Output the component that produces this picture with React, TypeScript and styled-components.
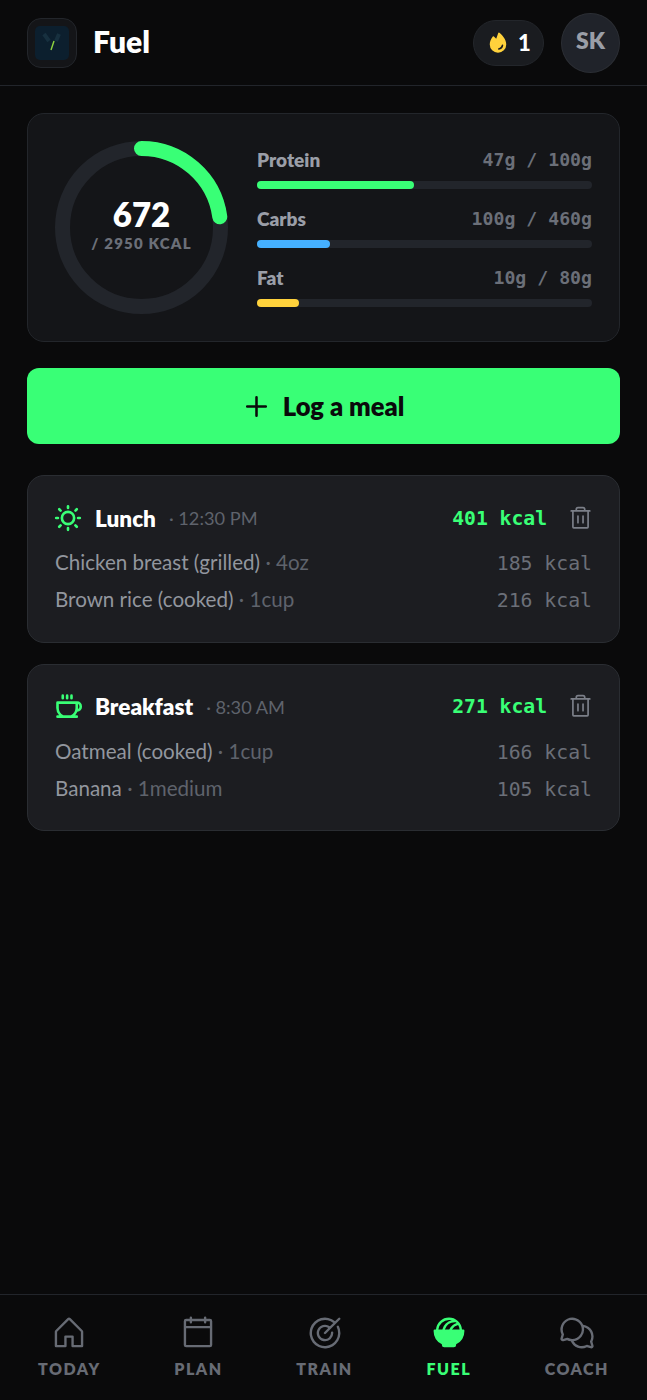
import { FC, ReactNode } from 'react';
import styled, { createGlobalStyle } from 'styled-components';
import {
  PiBowlFoodFill,
  PiCalendarBlank,
  PiChatsCircle,
  PiCoffeeBold,
  PiFireFill,
  PiHouse,
  PiPlusBold,
  PiSunBold,
  PiTarget,
  PiTrash,
} from 'react-icons/pi';

const GREEN = '#39ff76';
const SANS = '"Lato", "Noto Sans", sans-serif';
const MONO = '"DejaVu Sans Mono", "Liberation Mono", monospace';

const GlobalStyle = createGlobalStyle`
  html, body {
    margin: 0;
    padding: 0;
    background: #0a0a0b;
  }
  * {
    box-sizing: border-box;
  }
`;

const Page = styled.div`
  width: 647px;
  height: 1400px;
  display: flex;
  flex-direction: column;
  background: #0a0a0b;
  font-family: ${SANS};
  color: #fff;
`;

const Header = styled.header`
  height: 86px;
  padding: 0 27px;
  display: flex;
  align-items: center;
  border-bottom: 1px solid #22252b;
`;

const LogoBox = styled.div`
  width: 50px;
  height: 50px;
  display: flex;
  align-items: center;
  justify-content: center;
  border: 1px solid #23262b;
  border-radius: 14px;
  background: #141518;
`;

const Title = styled.h1`
  margin: 0 0 4px 16px;
  flex: 1;
  font-size: 30px;
  font-weight: 800;
`;

const StreakPill = styled.div`
  width: 71px;
  height: 46px;
  display: flex;
  align-items: center;
  justify-content: center;
  gap: 8px;
  border: 1px solid #23262b;
  border-radius: 23px;
  background: #1a1c20;
  font-size: 22px;
  font-weight: 900;
  color: #ffd23c;

  span {
    color: #fff;
  }
`;

const Avatar = styled.div`
  width: 59px;
  height: 60px;
  margin-left: 17px;
  padding-bottom: 5px;
  display: flex;
  align-items: center;
  justify-content: center;
  border: 1px solid #2b2e34;
  border-radius: 50%;
  background: #20232a;
  font-size: 23px;
  font-weight: 800;
  color: #9a9ea7;
`;

const Main = styled.main`
  flex: 1;
  padding: 27px 27px 0;
  display: flex;
  flex-direction: column;
`;

const Summary = styled.section`
  height: 229px;
  padding: 0 27px;
  display: flex;
  align-items: center;
  gap: 29px;
  border: 1px solid #23262b;
  border-radius: 17px;
  background: #141518;
`;

const Ring = styled.div`
  position: relative;
  width: 173px;
  height: 173px;
  flex: none;
`;

const RingLabel = styled.div`
  position: absolute;
  inset: 0;
  padding-bottom: 7px;
  display: flex;
  flex-direction: column;
  align-items: center;
  justify-content: center;
`;

const RingValue = styled.div`
  font-size: 33px;
  line-height: 38px;
  font-weight: 800;
`;

const RingGoal = styled.div`
  font-size: 15px;
  line-height: 20px;
  font-weight: 800;
  letter-spacing: 1.2px;
  color: #6b6f78;
`;

const Macros = styled.div`
  flex: 1;
  display: flex;
  flex-direction: column;
  gap: 19px;
`;

const MacroTop = styled.div`
  height: 22px;
  display: flex;
  align-items: center;
  justify-content: space-between;
`;

const MacroName = styled.div`
  font-size: 19px;
  font-weight: 800;
  color: #9a9ea7;
`;

const MacroAmount = styled.div`
  font-family: ${MONO};
  font-size: 18.2px;
  font-weight: 700;
  color: #6b6f78;
`;

const Track = styled.div`
  height: 8px;
  margin-top: 10px;
  border-radius: 4px;
  background: #22252b;
`;

const Fill = styled.div<{ $color: string }>`
  height: 100%;
  border-radius: 4px;
  background: ${({ $color }) => $color};
`;

const LogButton = styled.button`
  height: 76px;
  margin: 26px 0 31px;
  display: flex;
  align-items: center;
  justify-content: center;
  gap: 13px;
  border: 0;
  border-radius: 12px;
  background: ${GREEN};
  font-family: ${SANS};
  font-size: 25.5px;
  font-weight: 800;
  color: #0a0a0b;
`;

const MealCard = styled.section`
  padding: 20px 27px 24px;
  margin-bottom: 21px;
  border: 1px solid #2a2d32;
  border-radius: 17px;
  background: #1c1d21;
`;

const MealHead = styled.div`
  height: 44px;
  display: flex;
  align-items: center;
  margin-bottom: 4px;
`;

const MealIcon = styled.div`
  width: 39px;
  display: flex;
  color: ${GREEN};
  font-size: 28px;
  margin-left: -1px;
  margin-right: 2px;
`;

const MealName = styled.div`
  font-size: 22.5px;
  font-weight: 800;
`;

const MealTime = styled.div`
  flex: 1;
  margin-left: 13px;
  font-size: 18.2px;
  color: #5f636c;
`;

const MealKcal = styled.div`
  font-family: ${MONO};
  font-size: 19.7px;
  font-weight: 700;
  color: ${GREEN};
`;

const DeleteButton = styled.div`
  margin: 0 -2px 0 20px;
  display: flex;
  font-size: 27px;
  color: #7b7f88;
`;

const FoodRow = styled.div`
  height: 36.8px;
  display: flex;
  align-items: center;
  justify-content: space-between;
  font-size: 20.6px;
  color: #92969e;

  small {
    font-size: inherit;
    color: #5f636c;
  }
`;

const FoodKcal = styled.div`
  padding-top: 3px;
  font-family: ${MONO};
  font-size: 19.8px;
  color: #6b6f78;
`;

const BottomNav = styled.nav`
  height: 106px;
  padding: 19px 38px 0;
  display: flex;
  justify-content: space-between;
  border-top: 1px solid #22252b;
`;

const NavItem = styled.div<{ $active?: boolean }>`
  display: flex;
  flex-direction: column;
  align-items: center;
  gap: 7px;
  font-size: 16px;
  font-weight: 800;
  letter-spacing: 1.5px;
  color: ${({ $active }) => ($active ? GREEN : '#676b74')};
`;

const macros = [
  { name: 'Protein', amount: '47g / 100g', pct: 47, color: GREEN },
  { name: 'Carbs', amount: '100g / 460g', pct: 21.8, color: '#45b0ff' },
  { name: 'Fat', amount: '10g / 80g', pct: 12.5, color: '#ffd23c' },
];

const meals = [
  {
    name: 'Lunch',
    time: '· 12:30 PM',
    kcal: '401 kcal',
    icon: <PiSunBold />,
    foods: [
      { name: 'Chicken breast (grilled)', qty: '4oz', kcal: '185 kcal' },
      { name: 'Brown rice (cooked)', qty: '1cup', kcal: '216 kcal' },
    ],
  },
  {
    name: 'Breakfast',
    time: '· 8:30 AM',
    kcal: '271 kcal',
    icon: <PiCoffeeBold />,
    foods: [
      { name: 'Oatmeal (cooked)', qty: '1cup', kcal: '166 kcal' },
      { name: 'Banana', qty: '1medium', kcal: '105 kcal' },
    ],
  },
];

const tabs: { label: string; icon: ReactNode; active?: boolean }[] = [
  { label: 'TODAY', icon: <PiHouse size={38} /> },
  { label: 'PLAN', icon: <PiCalendarBlank size={38} /> },
  { label: 'TRAIN', icon: <PiTarget size={38} /> },
  { label: 'FUEL', icon: <PiBowlFoodFill size={38} />, active: true },
  { label: 'COACH', icon: <PiChatsCircle size={38} /> },
];

const CalorieRing: FC<{ value: number; goal: number }> = ({ value, goal }) => {
  const r = 79;
  const circumference = 2 * Math.PI * r;
  return (
    <Ring>
      <svg width="173" height="173" viewBox="0 0 173 173">
        <circle cx="86.5" cy="86.5" r={r} fill="none" stroke="#22252b" strokeWidth="15" />
        <circle
          cx="86.5"
          cy="86.5"
          r={r}
          fill="none"
          stroke={GREEN}
          strokeWidth="15"
          strokeLinecap="round"
          strokeDasharray={`${(circumference * value) / goal} ${circumference}`}
          transform="rotate(-90 86.5 86.5)"
        />
      </svg>
      <RingLabel>
        <RingValue>{value}</RingValue>
        <RingGoal>/ {goal} KCAL</RingGoal>
      </RingLabel>
    </Ring>
  );
};

const App: FC = () => (
  <Page>
    <GlobalStyle />
    <Header>
      <LogoBox>
        <svg width="34" height="34" viewBox="0 0 34 34">
          <rect width="34" height="34" rx="5" fill="#0c1f2e" />
          <path d="M9 8l5 7M24 8l-3 7" stroke="#17303f" strokeWidth="4" fill="none" />
          <path d="M19 15l-3 9" stroke="#8fd43f" strokeWidth="1.4" fill="none" />
        </svg>
      </LogoBox>
      <Title>Fuel</Title>
      <StreakPill>
        <PiFireFill size={24} />
        <span>1</span>
      </StreakPill>
      <Avatar>SK</Avatar>
    </Header>
    <Main>
      <Summary>
        <CalorieRing value={672} goal={2950} />
        <Macros>
          {macros.map((m) => (
            <div key={m.name}>
              <MacroTop>
                <MacroName>{m.name}</MacroName>
                <MacroAmount>{m.amount}</MacroAmount>
              </MacroTop>
              <Track>
                <Fill $color={m.color} style={{ width: `${m.pct}%` }} />
              </Track>
            </div>
          ))}
        </Macros>
      </Summary>
      <LogButton>
        <PiPlusBold size={27} />
        Log a meal
      </LogButton>
      {meals.map((meal) => (
        <MealCard key={meal.name}>
          <MealHead>
            <MealIcon>{meal.icon}</MealIcon>
            <MealName>{meal.name}</MealName>
            <MealTime>{meal.time}</MealTime>
            <MealKcal>{meal.kcal}</MealKcal>
            <DeleteButton>
              <PiTrash />
            </DeleteButton>
          </MealHead>
          {meal.foods.map((food) => (
            <FoodRow key={food.name}>
              <div>
                {food.name} <small>· {food.qty}</small>
              </div>
              <FoodKcal>{food.kcal}</FoodKcal>
            </FoodRow>
          ))}
        </MealCard>
      ))}
    </Main>
    <BottomNav>
      {tabs.map((tab) => (
        <NavItem key={tab.label} $active={tab.active}>
          {tab.icon}
          {tab.label}
        </NavItem>
      ))}
    </BottomNav>
  </Page>
);

export default App;
